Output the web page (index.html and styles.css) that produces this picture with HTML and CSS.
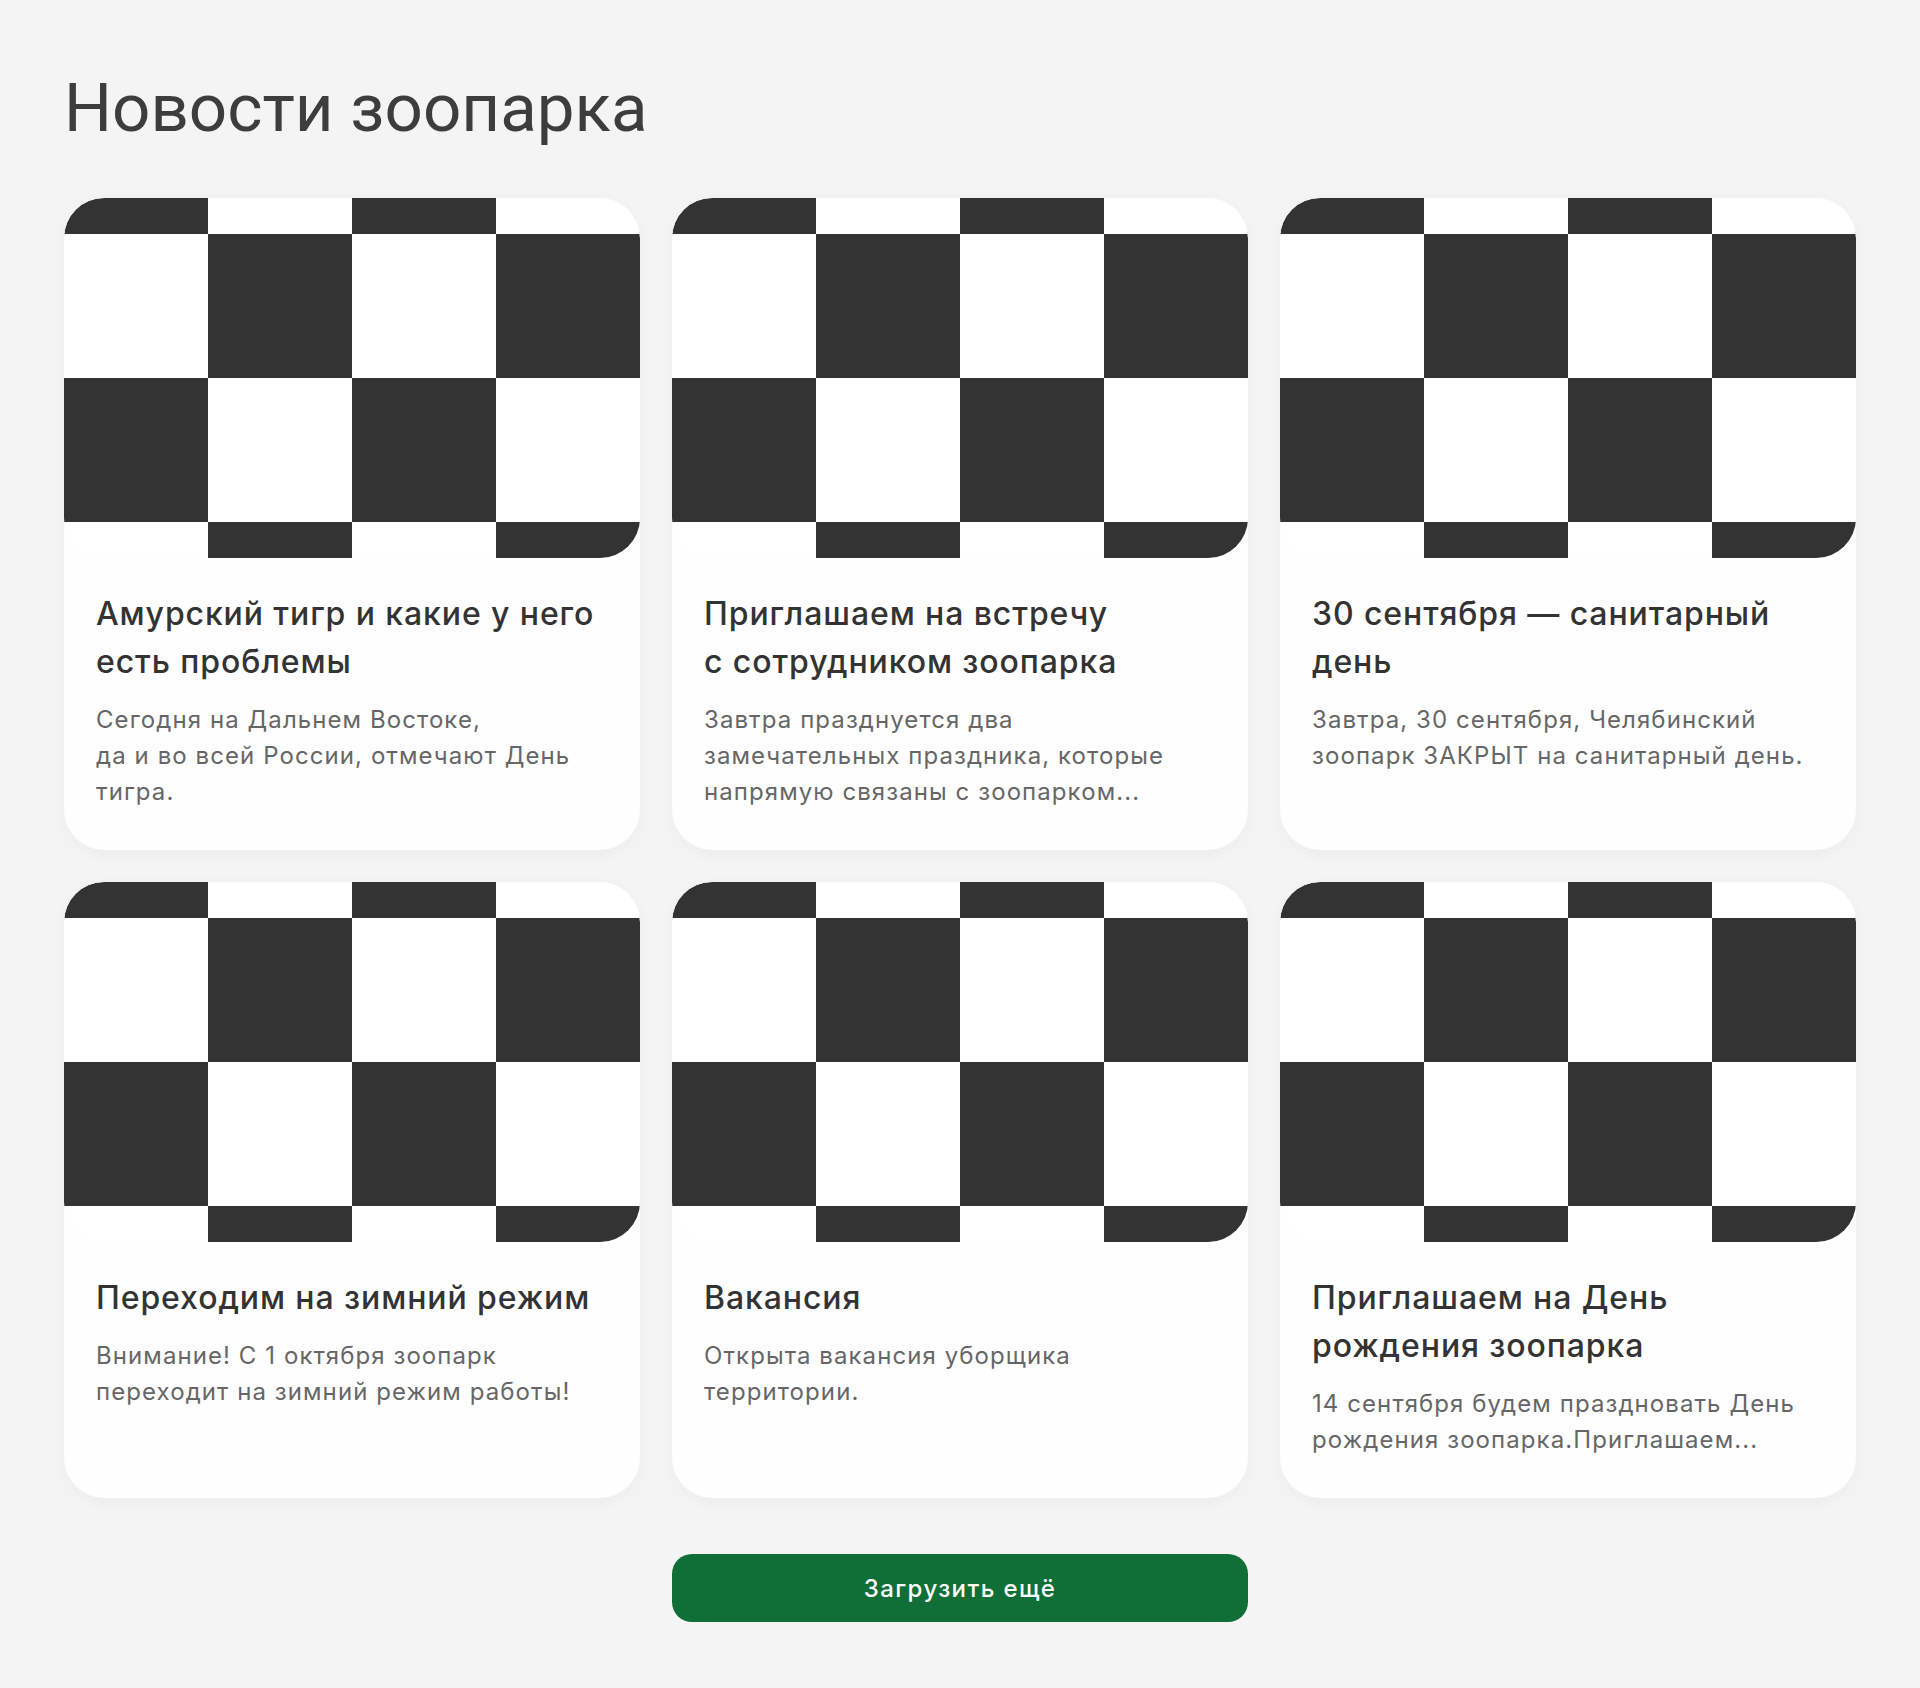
FILE: index.html
```html
<!DOCTYPE html>
<html lang="ru">
<head>
<meta charset="utf-8">
<title>Новости зоопарка</title>
<link rel="stylesheet" href="styles.css">
</head>
<body>
<main class="page">
  <h1 class="page-title">Новости зоопарка</h1>
  <section class="news-grid">
    <article class="card">
      <div class="card-image"></div>
      <div class="card-body">
        <h2 class="card-title">Амурский тигр и какие у него есть проблемы</h2>
        <p class="card-text">Сегодня на Дальнем Востоке,<br>да и во всей России, отмечают День тигра.</p>
      </div>
    </article>
    <article class="card">
      <div class="card-image"></div>
      <div class="card-body">
        <h2 class="card-title">Приглашаем на встречу<br>с сотрудником зоопарка</h2>
        <p class="card-text">Завтра празднуется два<br>замечательных праздника, которые напрямую связаны с зоопарком...</p>
      </div>
    </article>
    <article class="card">
      <div class="card-image"></div>
      <div class="card-body">
        <h2 class="card-title">30 сентября — санитарный день</h2>
        <p class="card-text">Завтра, 30 сентября, Челябинский зоопарк ЗАКРЫТ на санитарный день.</p>
      </div>
    </article>
    <article class="card">
      <div class="card-image"></div>
      <div class="card-body">
        <h2 class="card-title">Переходим на зимний режим</h2>
        <p class="card-text">Внимание! С 1 октября зоопарк<br>переходит на зимний режим работы!</p>
      </div>
    </article>
    <article class="card">
      <div class="card-image"></div>
      <div class="card-body">
        <h2 class="card-title">Вакансия</h2>
        <p class="card-text">Открыта вакансия уборщика<br>территории.</p>
      </div>
    </article>
    <article class="card">
      <div class="card-image"></div>
      <div class="card-body">
        <h2 class="card-title">Приглашаем на День<br>рождения зоопарка</h2>
        <p class="card-text">14 сентября будем праздновать День рождения зоопарка.Приглашаем...</p>
      </div>
    </article>
  </section>
  <div class="more">
    <button class="more-button" type="button">Загрузить ещё</button>
  </div>
</main>
</body>
</html>
```

FILE: styles.css
```css
* {
  box-sizing: border-box;
}

html, body {
  margin: 0;
  padding: 0;
}

body {
  background: #f4f4f4;
  font-family: Inter, "Noto Sans", sans-serif;
  color: #333333;
}

.page {
  padding: 68px 64px 64px;
}

.page-title {
  margin: 0 0 50px;
  font-family: Roboto, "Liberation Sans", sans-serif;
  font-weight: 400;
  font-size: 67.3px;
  line-height: 80px;
  color: #3d3d3d;
}

.news-grid {
  display: grid;
  grid-template-columns: repeat(3, 1fr);
  gap: 32px;
}

.card {
  display: flex;
  flex-direction: column;
  background: #fefefe;
  border-radius: 40px;
  overflow: hidden;
  box-shadow: 0 4px 18px rgba(0, 0, 0, 0.035);
}

.card-image {
  height: 360px;
  border-radius: 40px;
  background-color: #ffffff;
  background-image: conic-gradient(#ffffff 0 25%, #333333 0 50%, #ffffff 0 75%, #333333 0);
  background-size: 288px 288px;
  background-position: 0 -108px;
}

.card-body {
  padding: 32px 32px 40px;
}

.card-title {
  margin: 0 0 16px;
  font-size: 32px;
  line-height: 48px;
  font-weight: 500;
  letter-spacing: 0.9px;
  color: #333333;
}

.card-text {
  margin: 0;
  font-size: 24px;
  line-height: 36px;
  font-weight: 400;
  letter-spacing: 1.08px;
  color: #666666;
}

.more {
  display: flex;
  justify-content: center;
  margin-top: 56px;
}

.more-button {
  width: 576px;
  height: 68px;
  border: 0;
  border-radius: 20px;
  background: #106f37;
  color: #ffffff;
  font-family: Inter, "Noto Sans", sans-serif;
  font-size: 24px;
  font-weight: 500;
  letter-spacing: 1.4px;
  cursor: pointer;
}
```
